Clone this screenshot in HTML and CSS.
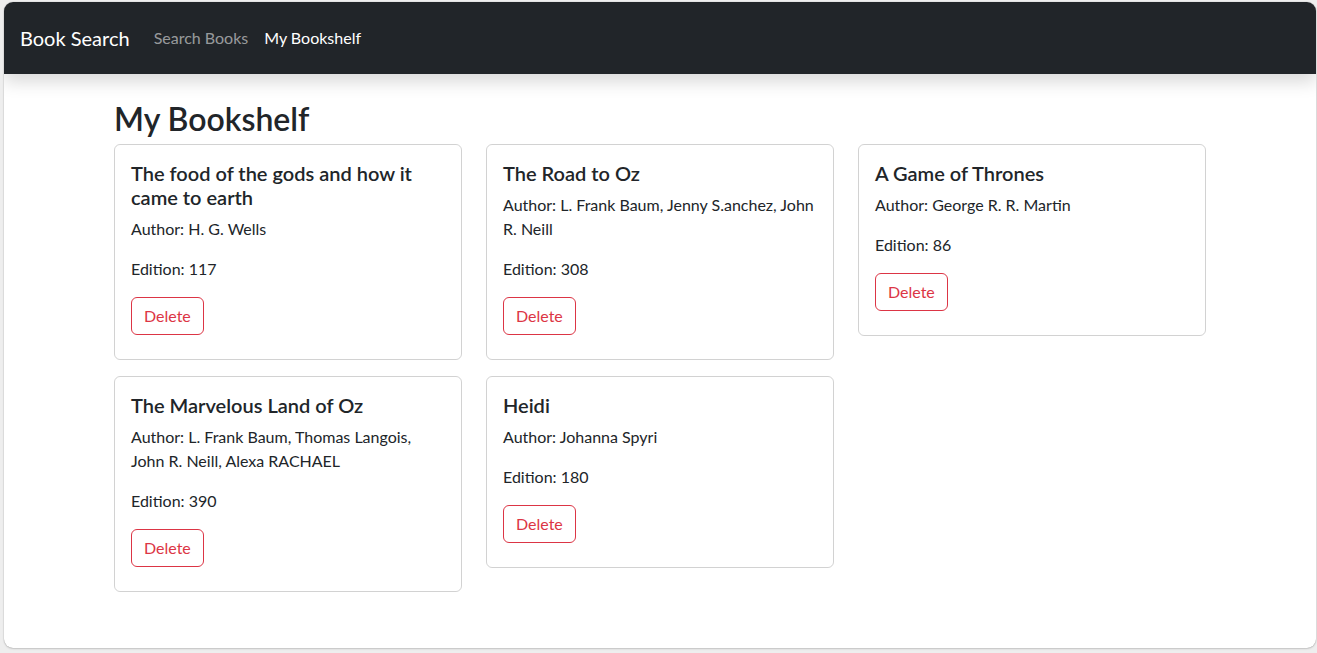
FILE: index.html
```html
<!DOCTYPE html>
<html lang="en">
<head>
<meta charset="utf-8">
<title>Book Search</title>
<link rel="stylesheet" href="styles.css">
</head>
<body>
<div class="frame">
  <nav class="navbar">
    <a class="brand" href="#">Book Search</a>
    <ul class="nav">
      <li><a class="nav-link" href="#">Search Books</a></li>
      <li><a class="nav-link active" href="#">My Bookshelf</a></li>
    </ul>
  </nav>
  <main class="container">
    <h1 class="page-title">My Bookshelf</h1>
    <div class="grid">
      <div class="card">
        <h5 class="card-title">The food of the gods and how it came to earth</h5>
        <p class="card-text">Author: H. G. Wells</p>
        <p class="card-text">Edition: 117</p>
        <button class="btn-delete" type="button">Delete</button>
      </div>
      <div class="card">
        <h5 class="card-title">The Road to Oz</h5>
        <p class="card-text">Author: L. Frank Baum, Jenny S.anchez, John R. Neill</p>
        <p class="card-text">Edition: 308</p>
        <button class="btn-delete" type="button">Delete</button>
      </div>
      <div class="card">
        <h5 class="card-title">A Game of Thrones</h5>
        <p class="card-text">Author: George R. R. Martin</p>
        <p class="card-text">Edition: 86</p>
        <button class="btn-delete" type="button">Delete</button>
      </div>
      <div class="card">
        <h5 class="card-title">The Marvelous Land of Oz</h5>
        <p class="card-text">Author: L. Frank Baum, Thomas Langois, John R. Neill, Alexa RACHAEL</p>
        <p class="card-text">Edition: 390</p>
        <button class="btn-delete" type="button">Delete</button>
      </div>
      <div class="card">
        <h5 class="card-title">Heidi</h5>
        <p class="card-text">Author: Johanna Spyri</p>
        <p class="card-text">Edition: 180</p>
        <button class="btn-delete" type="button">Delete</button>
      </div>
    </div>
  </main>
</div>
</body>
</html>
```

FILE: styles.css
```css
* { box-sizing: border-box; }

html, body {
  margin: 0;
  padding: 0;
}

body {
  background: #eeeeee;
  font-family: "Lato", "Noto Sans", sans-serif;
  font-size: 16px;
  line-height: 1.5;
  color: #212529;
  height: 653px;
  overflow: hidden;
}

.frame {
  margin: 2px 1px 0 4px;
  height: 646px;
  background: #ffffff;
  border-radius: 9px;
  overflow: hidden;
  box-shadow: 0 0 1px rgba(0, 0, 0, 0.35), 0 1px 2px rgba(0, 0, 0, 0.15);
}

.navbar {
  position: relative;
  z-index: 2;
  height: 72px;
  background: #212529;
  display: flex;
  align-items: center;
  padding: 0 16px;
  box-shadow: 0 8px 16px rgba(0, 0, 0, 0.15);
}

.brand {
  color: #ffffff;
  font-size: 20px;
  line-height: 30px;
  text-decoration: none;
  margin-right: 16px;
}

.nav {
  display: flex;
  list-style: none;
  margin: 0;
  padding: 0;
}

.nav-link {
  display: block;
  padding: 8px;
  color: rgba(255, 255, 255, 0.55);
  text-decoration: none;
}

.nav-link.active {
  color: #ffffff;
}

.container {
  max-width: 1092px;
  margin: 0 auto;
}

.page-title {
  margin: 26px 0 6px;
  font-size: 32px;
  font-weight: 600;
  line-height: 1.2;
}

.grid {
  display: grid;
  grid-template-columns: repeat(3, 1fr);
  column-gap: 24px;
  row-gap: 16px;
  align-items: start;
}

.card {
  border: 1px solid rgba(0, 0, 0, 0.175);
  border-radius: 6px;
  padding: 16px 16px 8px;
}

.card-title {
  margin: 0 0 8px;
  font-size: 20px;
  font-weight: 600;
  line-height: 1.2;
}

.card-text {
  margin: 0 0 16px;
}

.btn-delete {
  display: block;
  font: inherit;
  line-height: 1.5;
  padding: 6px 12px;
  margin-bottom: 16px;
  color: #dc3545;
  background: transparent;
  border: 1px solid #dc3545;
  border-radius: 6px;
}
```
